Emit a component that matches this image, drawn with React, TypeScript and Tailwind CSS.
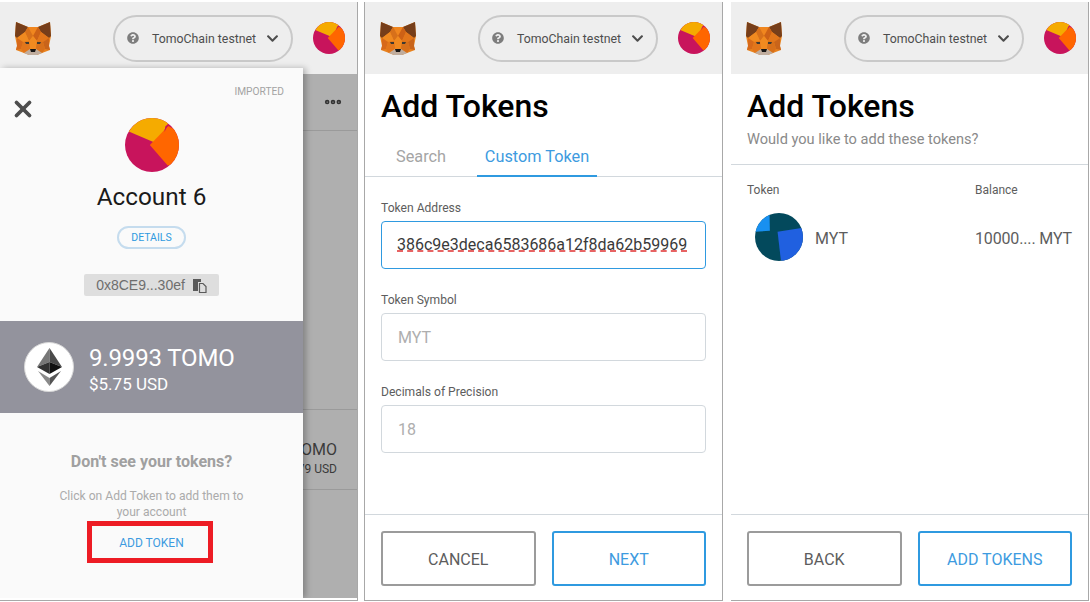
import { X, Ellipsis } from "lucide-react";
import { FaChevronDown, FaQuestionCircle } from "react-icons/fa";

function Fox() {
  return (
    <svg width="36" height="33" viewBox="0 0 36 33" className="shrink-0">
      <polygon points="1,0 13,5 23,5 35,0 36,14 34,24 35,28 27,31 22,33 14,33 9,31 1,28 2,24 0,14" fill="#e8821e" />
      <polygon points="1,0 13,5 10,10 2,16 0,14" fill="#763e1a" />
      <polygon points="35,0 23,5 26,10 34,16 36,14" fill="#763e1a" />
      <polygon points="13,5 23,5 18,14" fill="#f0861f" />
      <polygon points="10,10 13,5 18,14 14,19" fill="#d7701a" />
      <polygon points="26,10 23,5 18,14 22,19" fill="#cd6116" />
      <polygon points="2,16 10,10 14,19 8,20" fill="#f08a20" />
      <polygon points="34,16 26,10 22,19 28,20" fill="#e2761b" />
      <polygon points="2,16 8,20 6,27 1,28 2,24" fill="#d7691a" />
      <polygon points="34,16 28,20 30,27 35,28 34,24" fill="#c9641a" />
      <polygon points="14,19 18,14 22,19 21,27 15,27" fill="#f08a20" />
      <polygon points="8,20 14,19 15,27 9,31 6,27" fill="#e2761b" />
      <polygon points="28,20 22,19 21,27 27,31 30,27" fill="#d7701a" />
      <polygon points="10,20 14,20 14,22 11,22" fill="#3d3a33" />
      <polygon points="26,20 22,20 22,22 25,22" fill="#3d3a33" />
      <polygon points="9,31 15,27 21,27 27,31 22,33 14,33" fill="#c0ad9e" />
      <polygon points="15,27 21,27 20,30 16,30" fill="#161616" />
    </svg>
  );
}

function Blockie({ size }: { size: number }) {
  return (
    <svg width={size} height={size} viewBox="0 0 100 100" className="shrink-0 rounded-full">
      <rect width="100" height="100" fill="#c8145c" />
      <polygon points="7,25 59,47 82,6 40,-20" fill="#f5ab00" />
      <polygon points="46,50 80,15 110,30 110,80 79,88" fill="#ff6600" />
      <polygon points="75,15 80,12 73,26" fill="#c8145c" />
    </svg>
  );
}

function TokenIcon() {
  return (
    <svg width="48" height="48" viewBox="0 0 100 100" className="shrink-0 rounded-full">
      <rect width="100" height="100" fill="#03495c" />
      <polygon points="47,39 110,29 110,110 54,99" fill="#2060e0" />
      <polygon points="-10,-10 30,-10 31,37 -10,40" fill="#1890f0" />
    </svg>
  );
}

function Header() {
  return (
    <div className="flex h-[72px] shrink-0 items-center bg-[#eeeeee] pr-[12px] pl-[15px]">
      <Fox />
      <div className="ml-[62px] flex h-[47px] w-[180px] items-center rounded-full border-[2px] border-[#c9c9c9] pr-[12px] pl-[12px] text-[12.3px] text-[#4d4d4d]">
        <FaQuestionCircle size={12} className="shrink-0 text-[#7d7d7d]" />
        <span className="ml-[13px] flex-1 pt-[2px] whitespace-nowrap">TomoChain testnet</span>
        <FaChevronDown size={13} className="shrink-0 text-[#4d4d4d]" />
      </div>
      <div className="ml-auto">
        <Blockie size={32} />
      </div>
    </div>
  );
}

function Field({ label, value, focused }: { label: string; value: string; focused?: boolean }) {
  return (
    <div>
      <div className="text-[12.1px] leading-[14px] text-[#5d5d5d]">{label}</div>
      <div
        className={`mt-[6px] flex h-[48px] items-center overflow-hidden rounded-[4px] border px-[15px] text-[16px] ${
          focused ? "border-[#2f9ae0] text-[#3a3a3a]" : "border-[#d2d8dd] pt-[2px] pl-[16px] text-[#aeaeae]"
        }`}
      >
        <span className={`whitespace-nowrap ${focused ? "underline decoration-[#e03030] decoration-dashed underline-offset-1" : ""}`}>
          {value}
        </span>
      </div>
    </div>
  );
}

function FooterButtons({ left, right }: { left: string; right: string }) {
  return (
    <div className="flex shrink-0 gap-[16px] border-t border-[#d2d8dd] px-[16px] pt-[16px] pb-[14px]">
      <button className="h-[55px] flex-1 rounded-[3px] border-[2px] border-[#9b9b9b] pt-[2px] text-[16px] text-[#5d5d5d]">{left}</button>
      <button className="h-[55px] flex-1 rounded-[3px] border-[2px] border-[#2f9ae0] pt-[2px] text-[16px] text-[#3d9be0]">{right}</button>
    </div>
  );
}

function Drawer() {
  return (
    <div className="absolute top-[66px] bottom-0 left-0 flex w-[303px] flex-col bg-[#fafafa] shadow-[3px_0_6px_rgba(0,0,0,0.25)]">
      <div className="relative flex h-[253px] shrink-0 flex-col items-center pt-[50px]">
        <div className="absolute top-[16px] right-[19px] text-[10.2px] text-[#a3a3a3]">IMPORTED</div>
        <X size={26} strokeWidth={3.5} className="absolute top-[28px] left-[10px] text-[#4d4d4d]" />
        <Blockie size={54} />
        <div className="mt-[9px] text-[24.3px] leading-[32px] text-[#1a1a1a]">Account 6</div>
        <div className="mt-[13px] flex h-[23px] w-[69px] items-center justify-center rounded-full border-[2px] border-[#c5dcee] text-[10.5px] text-[#2f9ae0]">
          DETAILS
        </div>
        <div className="mt-[25px] flex h-[22px] w-[135px] items-center justify-center gap-[7px] rounded-[2px] bg-[#dedede] font-['Liberation_Sans',sans-serif] text-[14px] text-[#6e6e6e]">
          0x8CE9...30ef
          <svg width="15" height="15" viewBox="0 0 15 15">
            <path d="M1 1h8v3H6v9H1z" fill="#5a5a5a" />
            <path d="M7.500 5.500h3.500l3 3v6H7.500z" fill="none" stroke="#5a5a5a" strokeWidth="1.200" />
          </svg>
        </div>
      </div>
      <div className="flex h-[92px] shrink-0 items-center bg-[#93939d] pl-[24px]">
        <div className="flex h-[50px] w-[50px] items-center justify-center rounded-full border border-[#d8d8d8] bg-white">
          <svg width="25" height="38" viewBox="0 0 25 38">
            <polygon points="12.500,0 0,19 12.500,14" fill="#777777" />
            <polygon points="12.500,0 25,19 12.500,14" fill="#4a4a4a" />
            <polygon points="12.500,14 0,19 12.500,26" fill="#333333" />
            <polygon points="12.500,14 25,19 12.500,26" fill="#111111" />
            <polygon points="1,23 12.500,38 12.500,30" fill="#8a8a8a" />
            <polygon points="24,23 12.500,38 12.500,30" fill="#555555" />
          </svg>
        </div>
        <div className="ml-[15px] pt-[6px] text-white">
          <div className="text-[24px] leading-[28px] tracking-[-0.15px]">9.9993 TOMO</div>
          <div className="text-[17px] leading-[24px]">$5.75 USD</div>
        </div>
      </div>
      <div className="flex flex-1 flex-col items-center pt-[39px]">
        <div className="text-[16px] leading-[20px] font-bold text-[#a0a0a0]">Don't see your tokens?</div>
        <div className="mt-[16px] w-[200px] text-center text-[12.1px] leading-[16px] text-[#ababab]">
          Click on Add Token to add them to your account
        </div>
        <div className="mt-[1px] mr-[3px] flex h-[42px] w-[126px] items-center justify-center border-[5px] border-[#ed1c24] pt-[2px] pl-[3px] text-[12px] text-[#3d9be0]">
          ADD TOKEN
        </div>
      </div>
    </div>
  );
}

function AccountPanel() {
  return (
    <div className="h-[599px] w-[358px] shrink-0 border-r border-b border-[#a8a8a8] bg-white pb-[2px]">
      <div className="relative flex h-full flex-col overflow-hidden bg-[#afafaf]">
        <Header />
        <div className="flex h-[57px] shrink-0 items-center justify-end border-b border-[#9a9a9a] pr-[14px]">
          <Ellipsis size={20} strokeWidth={3.5} className="text-[#333333]" />
        </div>
        <div className="h-[279px] shrink-0 border-b border-[#9a9a9a]" />
        <div className="flex h-[80px] shrink-0 flex-col items-end border-b border-[#9a9a9a] pt-[30px] pr-[20px] text-[#3b3b3b]">
          <div className="text-[16px] leading-[20px]">TOMO</div>
          <div className="text-[12px] leading-[19px]">$5.79 USD</div>
        </div>
        <Drawer />
      </div>
    </div>
  );
}

function CustomTokenPanel() {
  return (
    <div className="ml-[6px] flex h-[599px] w-[359px] shrink-0 flex-col border-x border-b border-[#a8a8a8] bg-white">
      <Header />
      <div className="px-[16px] pt-[12px] text-[32px] leading-[40px] font-medium text-black">Add Tokens</div>
      <div className="mt-[10px] flex h-[41px] gap-[16px] border-b border-[#d2d8dd] px-[16px] text-[16.3px]">
        <div className="flex h-[41px] w-[80px] items-center justify-center pt-[1px] text-[#a5a5a5]">Search</div>
        <div className="flex h-[41px] w-[120px] items-center justify-center border-b-[2px] border-[#2f9ae0] pt-[3px] text-[#3d9be0]">
          Custom Token
        </div>
      </div>
      <div className="flex flex-1 flex-col gap-[24px] px-[16px] pt-[24px]">
        <Field label="Token Address" value="386c9e3deca6583686a12f8da62b59969" focused />
        <Field label="Token Symbol" value="MYT" />
        <Field label="Decimals of Precision" value="18" />
      </div>
      <FooterButtons left="CANCEL" right="NEXT" />
    </div>
  );
}

function ConfirmPanel() {
  return (
    <div className="ml-[8px] flex h-[599px] w-[358px] shrink-0 flex-col border-r border-b border-[#a8a8a8] bg-white">
      <Header />
      <div className="h-[91px] shrink-0 border-b border-[#d2d8dd] px-[16px] pt-[12px]">
        <div className="text-[32px] leading-[40px] font-medium text-black">Add Tokens</div>
        <div className="mt-[3px] text-[14.6px] leading-[20px] text-[#8a8a8a]">Would you like to add these tokens?</div>
      </div>
      <div className="flex-1 px-[16px] pt-[18px] text-[#5d5d5d]">
        <div className="grid grid-cols-[228px_1fr] text-[12px] leading-[14px]">
          <div>Token</div>
          <div>Balance</div>
        </div>
        <div className="mt-[16px] grid grid-cols-[228px_1fr] items-center text-[16px]">
          <div className="flex items-center gap-[12px] pl-[8px]">
            <TokenIcon />
            <span className="pt-[4px]">MYT</span>
          </div>
          <div className="pt-[4px] tracking-[-0.15px] whitespace-nowrap">10000.... MYT</div>
        </div>
      </div>
      <FooterButtons left="BACK" right="ADD TOKENS" />
    </div>
  );
}

export default function App() {
  return (
    <div className="flex h-[602px] w-[1090px] items-start overflow-hidden bg-white pt-[2px] font-['Roboto',sans-serif]">
      <AccountPanel />
      <CustomTokenPanel />
      <ConfirmPanel />
    </div>
  );
}
